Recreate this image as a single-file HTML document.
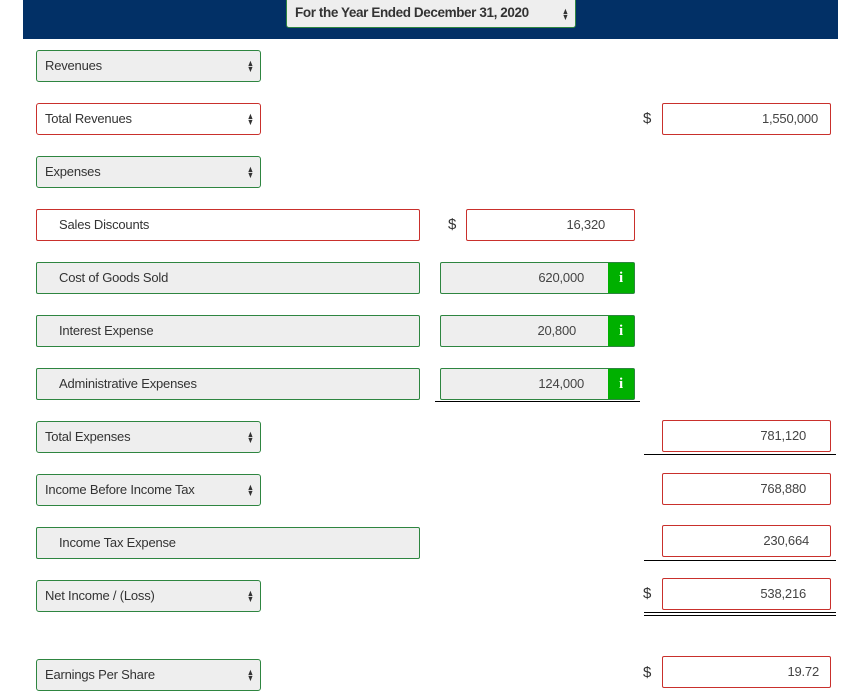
<!DOCTYPE html>
<html><head><style>
body{margin:0;width:868px;height:691px;background:#fff;font-family:"Liberation Sans",sans-serif;font-size:13px;letter-spacing:-0.2px;color:#333;position:relative;overflow:hidden}
.a{position:absolute;box-sizing:border-box}
.hdr{left:23px;top:0;width:815px;height:39px;background:#023066}
.sel{border:1px solid #2e8540;border-radius:3px;background:#eee;height:32px;line-height:30px;padding-left:8px}
.red{border-color:#c9302c!important}
.sel.red{background:#fff}
.arr{position:absolute;right:5px;top:0;font-size:9px;line-height:6px;color:#333;padding-top:9px;text-align:center;transform:scaleX(0.8)}
.box{border:1px solid #c9302c;border-radius:2px;height:32px;line-height:30px;text-align:right;background:#fff;color:#444}
.g{border:1px solid #2e8540;border-radius:2px;height:32px;line-height:30px;background:#eee}
.ib{position:absolute;right:0;top:0;width:26px;height:30px;line-height:30px;background:#00b000;color:#fff;font-weight:bold;text-align:center;font-family:"Liberation Serif",serif;font-size:15px}
.d{font-size:15px;color:#333}
.ln{height:1px;background:#000}
</style></head><body>
<div class="a hdr"></div>
<div class="a sel" style="left:286px;top:-4px;width:290px;height:32px;line-height:32px;padding-left:8px;font-weight:bold;color:#333;font-size:13.5px;letter-spacing:-0.4px;border-radius:3px">For the Year Ended December 31, 2020<div class="arr" style="padding-top:11px">▲<br>▼</div></div>

<div class="a sel" style="left:36px;top:50px;width:225px">Revenues<div class="arr">▲<br>▼</div></div>
<div class="a sel red" style="left:36px;top:103px;width:225px">Total Revenues<div class="arr">▲<br>▼</div></div>
<div class="a d" style="left:643px;top:110px">$</div>
<div class="a box" style="left:662px;top:103px;width:169px;padding-right:12px">1,550,000</div>

<div class="a sel" style="left:36px;top:156px;width:225px">Expenses<div class="arr">▲<br>▼</div></div>

<div class="a box" style="left:36px;top:209px;width:384px;text-align:left;padding-left:22px;color:#333">Sales Discounts</div>
<div class="a d" style="left:448px;top:216px">$</div>
<div class="a box" style="left:466px;top:209px;width:169px;padding-right:29px">16,320</div>

<div class="a g" style="left:36px;top:262px;width:384px;padding-left:22px">Cost of Goods Sold</div>
<div class="a g" style="left:440px;top:262px;width:195px;text-align:right;padding-right:50px;color:#444">620,000<div class="ib">i</div></div>
<div class="a g" style="left:36px;top:315px;width:384px;padding-left:22px">Interest Expense</div>
<div class="a g" style="left:440px;top:315px;width:195px;text-align:right;padding-right:58px;color:#444">20,800<div class="ib">i</div></div>
<div class="a g" style="left:36px;top:368px;width:384px;padding-left:22px">Administrative Expenses</div>
<div class="a g" style="left:440px;top:368px;width:195px;text-align:right;padding-right:50px;color:#444">124,000<div class="ib">i</div></div>
<div class="a ln" style="left:435px;top:401px;width:205px"></div>

<div class="a sel" style="left:36px;top:421px;width:225px">Total Expenses<div class="arr">▲<br>▼</div></div>
<div class="a box" style="left:662px;top:420px;width:169px;padding-right:24px">781,120</div>
<div class="a ln" style="left:644px;top:454px;width:192px"></div>

<div class="a sel" style="left:36px;top:474px;width:225px">Income Before Income Tax<div class="arr">▲<br>▼</div></div>
<div class="a box" style="left:662px;top:473px;width:169px;padding-right:24px">768,880</div>

<div class="a g" style="left:36px;top:527px;width:384px;padding-left:22px">Income Tax Expense</div>
<div class="a box" style="left:662px;top:525px;width:169px;padding-right:21px">230,664</div>
<div class="a ln" style="left:644px;top:560px;width:192px"></div>

<div class="a sel" style="left:36px;top:580px;width:225px">Net Income / (Loss)<div class="arr">▲<br>▼</div></div>
<div class="a d" style="left:643px;top:585px">$</div>
<div class="a box" style="left:662px;top:578px;width:169px;padding-right:24px">538,216</div>
<div class="a ln" style="left:644px;top:612px;width:192px"></div>
<div class="a ln" style="left:644px;top:615px;width:192px"></div>

<div class="a sel" style="left:36px;top:659px;width:225px">Earnings Per Share<div class="arr">▲<br>▼</div></div>
<div class="a d" style="left:643px;top:664px">$</div>
<div class="a box" style="left:662px;top:656px;width:169px;padding-right:11px">19.72</div>
</body></html>
